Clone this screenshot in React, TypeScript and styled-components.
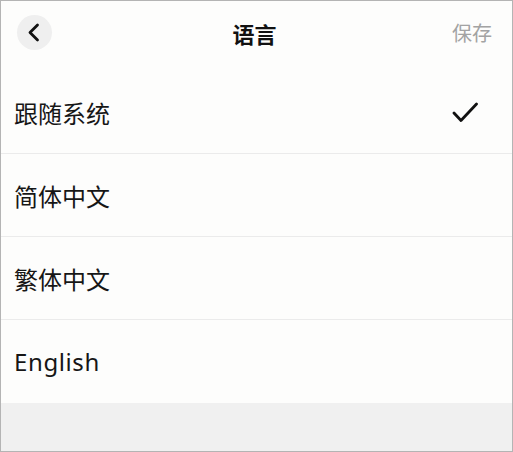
import React from "react";
import styled, { createGlobalStyle } from "styled-components";

const Global = createGlobalStyle`
  html, body { margin: 0; padding: 0; background: #fdfdfc; }
  * { box-sizing: border-box; }
`;

const Frame = styled.div`
  width: 513px;
  height: 452px;
  border: 1px solid #b4b4b4;
  background: #fdfdfc;
  display: flex;
  flex-direction: column;
  overflow: hidden;
  font-family: "Noto Sans", "Noto Sans CJK SC", sans-serif;
  color: #161616;
`;

const Header = styled.header`
  height: 70px;
  display: grid;
  grid-template-columns: 1fr auto 1fr;
  align-items: start;
  padding: 14px 20px 0 16px;
`;

const BackButton = styled.button`
  width: 35px;
  height: 35px;
  border-radius: 50%;
  border: none;
  padding: 0;
  background: #efefef;
  display: flex;
  align-items: center;
  justify-content: center;
  justify-self: start;
`;

const Title = styled.h1`
  margin: 0;
  font-family: "Noto Sans CJK SC", sans-serif;
  font-size: 22px;
  font-weight: 700;
  line-height: 36px;
  color: #111;
`;

const Save = styled.span`
  justify-self: end;
  font-family: "Noto Sans CJK SC", sans-serif;
  font-size: 20px;
  line-height: 36px;
  color: #a3a3a3;
`;

const List = styled.ul`
  list-style: none;
  margin: 0;
  padding: 0;
`;

const Row = styled.li<{ $last?: boolean }>`
  height: 83px;
  display: flex;
  align-items: center;
  justify-content: space-between;
  padding: 0 34px 0 13px;
  border-bottom: ${(p) => (p.$last ? "none" : "1px solid #ebebeb")};
  font-size: 24px;
  font-family: ${(p) => (p.$last ? `"Noto Sans", sans-serif` : `"Noto Sans CJK SC", sans-serif`)};
  letter-spacing: ${(p) => (p.$last ? "0.6px" : "0")};
  color: #161616;
`;

const Footer = styled.div`
  flex: 1;
  background: #f0f0f0;
`;

const items = ["跟随系统", "简体中文", "繁体中文", "English"];

export default function App() {
  return (
    <>
      <Global />
      <Frame>
        <Header>
          <BackButton aria-label="back">
            <svg width="35" height="35" viewBox="0 0 35 35">
              <polyline
                points="20.5,10 13,17.5 20.5,25"
                fill="none"
                stroke="#111"
                strokeWidth="2.8"
                strokeLinecap="round"
                strokeLinejoin="round"
              />
            </svg>
          </BackButton>
          <Title>语言</Title>
          <Save>保存</Save>
        </Header>
        <List>
          {items.map((t, i) => (
            <Row key={t} $last={i === items.length - 1}>
              <span>{t}</span>
              {i === 0 && (
                <svg width="26" height="22" viewBox="0 0 26 22">
                  <polyline
                    points="2,12 9,19.5 24.5,3"
                    fill="none"
                    stroke="#111"
                    strokeWidth="2.8"
                    strokeLinecap="round"
                    strokeLinejoin="round"
                  />
                </svg>
              )}
            </Row>
          ))}
        </List>
        <Footer />
      </Frame>
    </>
  );
}
